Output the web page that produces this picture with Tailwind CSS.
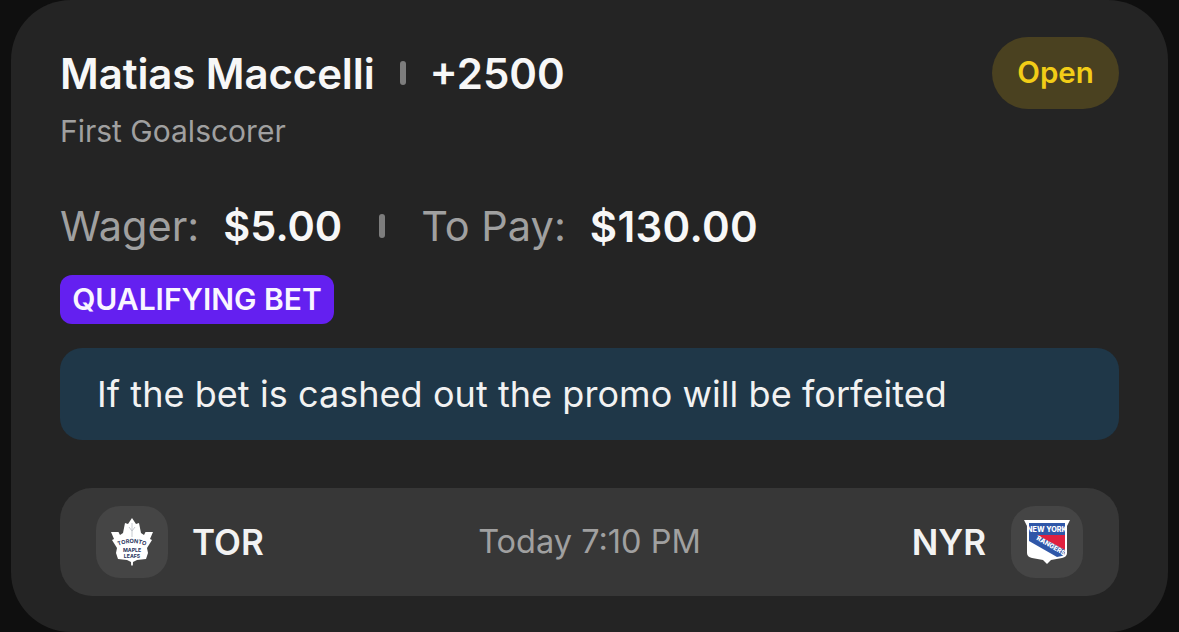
<!DOCTYPE html>
<html>
<head>
<meta charset="utf-8">
<script src="https://cdn.jsdelivr.net/npm/@tailwindcss/browser@4"></script>
</head>
<body class="m-0 bg-[#0f0f0f] font-[Inter,sans-serif]">
<div class="h-[632px] w-[1179px] pl-[11px] pr-[11px]">
  <div class="h-[632px] rounded-[60px] bg-[#242424] pl-[49px] pr-[49px] pt-[37px]">
    <div class="flex items-start justify-between">
      <div>
        <div class="flex h-[72px] items-center text-[42px] font-semibold text-[#f7f7f7]">
          <span class="tracking-[-0.1px]">Matias Maccelli</span>
          <span class="ml-[25px] mr-[24px] h-[24px] w-[6px] rounded-full bg-[#7d7d7d]"></span>
          <span>+2500</span>
        </div>
        <div class="mt-[1px] text-[30px] leading-[42px] text-[#a0a0a0]">First Goalscorer</div>
      </div>
      <div class="flex h-[72px] w-[127px] items-center justify-center rounded-full bg-[#4a4120] pb-[2px] text-[29.5px] font-semibold text-[#f2cd17]">Open</div>
    </div>
    <div class="mt-[44px] flex h-[60px] items-center text-[41.5px]">
      <span class="text-[#a0a0a0]">Wager:</span>
      <span class="ml-[24px] font-semibold text-[#f7f7f7]">$5.00</span>
      <span class="ml-[37px] mr-[36px] h-[24px] w-[6px] rounded-full bg-[#7d7d7d]"></span>
      <span class="text-[#a0a0a0]">To Pay:</span>
      <span class="ml-[24px] text-[42px] tracking-[0.3px] font-semibold text-[#f7f7f7]">$130.00</span>
    </div>
    <div class="mt-[19px] flex h-[49px] w-[274px] items-center justify-center rounded-[12px] bg-[#6420f0] text-[30px] font-semibold text-[#f9f6ff]">QUALIFYING BET</div>
    <div class="mt-[24px] flex h-[92px] items-center rounded-[22px] bg-[#1f3748] pl-[37px] text-[36px] tracking-[0.06px] text-[#f2f2f2]">If the bet is cashed out the promo will be forfeited</div>
    <div class="mt-[48px] flex h-[108px] items-center justify-between rounded-[32px] bg-[#373737] pl-[36px] pr-[36px]">
      <div class="flex w-[300px] items-center">
        <div class="flex h-[72px] w-[72px] items-center justify-center rounded-[24px] bg-[#454545]">
          <svg width="42" height="48" viewBox="0 0 42 48">
            <path fill="#ffffff" d="M21 0 L25 6 L28 5 L30 15 L33 17 L34.5 14 L42 14 L39 21 L41 22 L36 30 L37 35 L35 41 L26 42 L22 44 L21.8 47.5 L20.2 47.5 L20 44 L16 42 L7 41 L5 35 L6 30 L1 22 L3 21 L0 14 L7.5 14 L9 17 L12 15 L14 5 L17 6 Z"/>
            <path fill="none" stroke="#b9bcc4" stroke-width="0.8" d="M21 5 L21 19 M21 13 L18 9 M21 13 L24 9"/>
            <path id="arc" fill="none" d="M7 28 Q21 22 35 28"/>
            <text font-family="Inter" font-size="5.6" font-weight="700" fill="#2a3560" text-anchor="middle"><textPath href="#arc" startOffset="50%">TORONTO</textPath></text>
            <text x="21" y="34" text-anchor="middle" font-family="Inter" font-size="5.2" font-weight="700" fill="#2a3560">MAPLE</text>
            <text x="21" y="39.5" text-anchor="middle" font-family="Inter" font-size="5.2" font-weight="700" fill="#2a3560">LEAFS</text>
          </svg>
        </div>
        <span class="ml-[24px] text-[35px] font-semibold text-[#f2f2f2]">TOR</span>
      </div>
      <span class="text-[32.5px] text-[#a0a0a0]">Today 7:10 PM</span>
      <div class="flex w-[300px] items-center justify-end">
        <span class="mr-[25px] text-[35px] font-semibold text-[#f2f2f2]">NYR</span>
        <div class="flex h-[72px] w-[72px] items-center justify-center rounded-[24px] bg-[#454545]">
          <svg width="46" height="46" viewBox="0 0 46 46">
            <path fill="#ffffff" d="M0 1 L46 1 L43 7 L43 34 Q43 38 38 39 L27 41 L23 45 L19 41 L8 39 Q3 38 3 34 L3 7 Z"/>
            <path fill="#2f57a8" d="M5 4 L41 4 L41 16 L5 16 Z"/>
            <path fill="#e0203f" d="M13 16 L41 16 L41 31 Z"/>
            <path fill="#2f57a8" d="M5 16 L13 16 L41 31 L41 35 L38 37 L33 38 L5 22 Z"/>
            <text x="23" y="13" text-anchor="middle" font-family="Inter" font-size="7.2" font-weight="800" fill="#ffffff">NEW YORK</text>
            <text x="0" y="0" transform="translate(12 20.5) rotate(30)" font-family="Inter" font-size="6.6" font-weight="800" fill="#ffffff">RANGERS</text>
          </svg>
        </div>
      </div>
    </div>
  </div>
</div>
</body>
</html>
